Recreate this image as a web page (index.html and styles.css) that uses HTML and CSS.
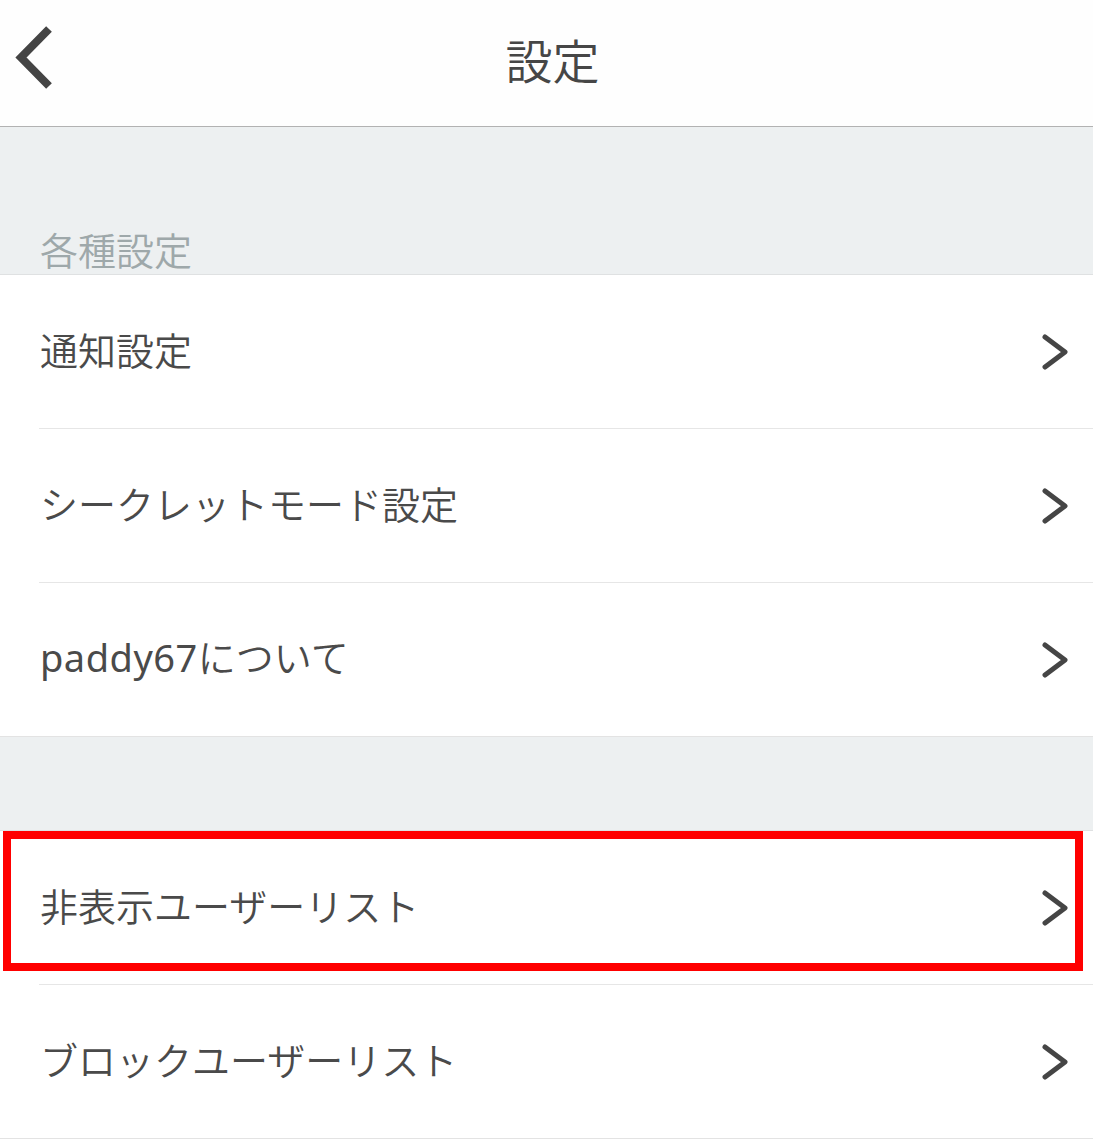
FILE: index.html
```html
<!DOCTYPE html>
<html lang="ja">
<head>
<meta charset="utf-8">
<title>設定</title>
<link rel="stylesheet" href="styles.css">
</head>
<body>
<div class="app">
  <header class="header">
    <svg class="back" width="50" height="80" viewBox="0 0 50 80" aria-hidden="true">
      <path d="M39 9 L11 37.5 L39 66" fill="none" stroke="#444" stroke-width="8" stroke-linecap="butt" stroke-linejoin="miter"/>
    </svg>
    <h1 class="title">設定</h1>
  </header>

  <div class="spacer spacer-top">
    <span class="section-label">各種設定</span>
  </div>

  <ul class="group">
    <li class="row"><div class="row-inner"><span class="row-text">通知設定</span><svg class="chev" width="32" height="44" viewBox="0 0 32 44"><path d="M5 7 L25 22 L5 37" fill="none" stroke="#454545" stroke-width="5" stroke-linecap="round" stroke-linejoin="round"/></svg></div></li>
    <li class="row"><div class="row-inner"><span class="row-text">シークレットモード設定</span><svg class="chev" width="32" height="44" viewBox="0 0 32 44"><path d="M5 7 L25 22 L5 37" fill="none" stroke="#454545" stroke-width="5" stroke-linecap="round" stroke-linejoin="round"/></svg></div></li>
    <li class="row"><div class="row-inner"><span class="row-text"><span class="latin">paddy67</span>について</span><svg class="chev" width="32" height="44" viewBox="0 0 32 44"><path d="M5 7 L25 22 L5 37" fill="none" stroke="#454545" stroke-width="5" stroke-linecap="round" stroke-linejoin="round"/></svg></div></li>
  </ul>

  <div class="spacer spacer-mid"></div>

  <ul class="group">
    <li class="row highlighted"><div class="row-inner"><span class="row-text">非表示ユーザーリスト</span><svg class="chev" width="32" height="44" viewBox="0 0 32 44"><path d="M5 7 L25 22 L5 37" fill="none" stroke="#454545" stroke-width="5" stroke-linecap="round" stroke-linejoin="round"/></svg></div><div class="mark"></div></li>
    <li class="row"><div class="row-inner"><span class="row-text">ブロックユーザーリスト</span><svg class="chev" width="32" height="44" viewBox="0 0 32 44"><path d="M5 7 L25 22 L5 37" fill="none" stroke="#454545" stroke-width="5" stroke-linecap="round" stroke-linejoin="round"/></svg></div></li>
  </ul>
</div>
</body>
</html>
```

FILE: styles.css
```css
* { box-sizing: border-box; }
html, body {
  margin: 0;
  padding: 0;
  background: #ffffff;
}
body {
  font-family: "Noto Sans", "Noto Sans CJK JP", sans-serif;
  color: #4a4a4a;
}
.app {
  width: 1093px;
}
.header {
  height: 127px;
  border-bottom: 1px solid #b2b2b2;
  display: flex;
  align-items: center;
  justify-content: center;
  position: relative;
  background: #fefefe;
}
.back {
  position: absolute;
  left: 10px;
  top: 20px;
}
.title {
  margin: -10px 0 0 12px;
  font-family: "Noto Sans CJK JP", sans-serif;
  font-weight: 350;
  font-size: 47px;
  line-height: 1;
  color: #464646;
}
.spacer {
  background: #edf0f1;
}
.spacer-top {
  height: 147px;
  display: flex;
  align-items: flex-end;
  padding-left: 40px;
  padding-bottom: 6px;
}
.section-label {
  font-family: "Noto Sans CJK JP", sans-serif;
  font-weight: 350;
  font-size: 38px;
  line-height: 38px;
  color: #9ea8aa;
}
.spacer-mid {
  height: 93px;
}
.group {
  list-style: none;
  margin: 0;
  padding: 0;
  border-top: 1px solid #dfe1e2;
  border-bottom: 1px solid #e3e3e3;
}
.row {
  position: relative;
  padding-left: 39px;
}
.row-inner {
  height: 154px;
  display: flex;
  align-items: center;
  justify-content: space-between;
  border-bottom: 1px solid #e6e6e6;
  padding-left: 1px;
  padding-right: 21px;
}
.row:last-child .row-inner {
  height: 153px;
  border-bottom: none;
}
.row-text {
  font-family: "Noto Sans CJK JP", sans-serif;
  font-size: 38px;
  font-weight: 350;
  line-height: 1;
  color: #4a4a4a;
  margin-top: -6px;
}
.latin {
  font-family: "Noto Sans", sans-serif;
  font-weight: 400;
  letter-spacing: 0.5px;
}
.chev {
  display: block;
  flex: none;
}
.mark {
  position: absolute;
  left: 3px;
  top: 0;
  width: 1080px;
  height: 140px;
  border: 8px solid #ff0000;
  pointer-events: none;
}
```
